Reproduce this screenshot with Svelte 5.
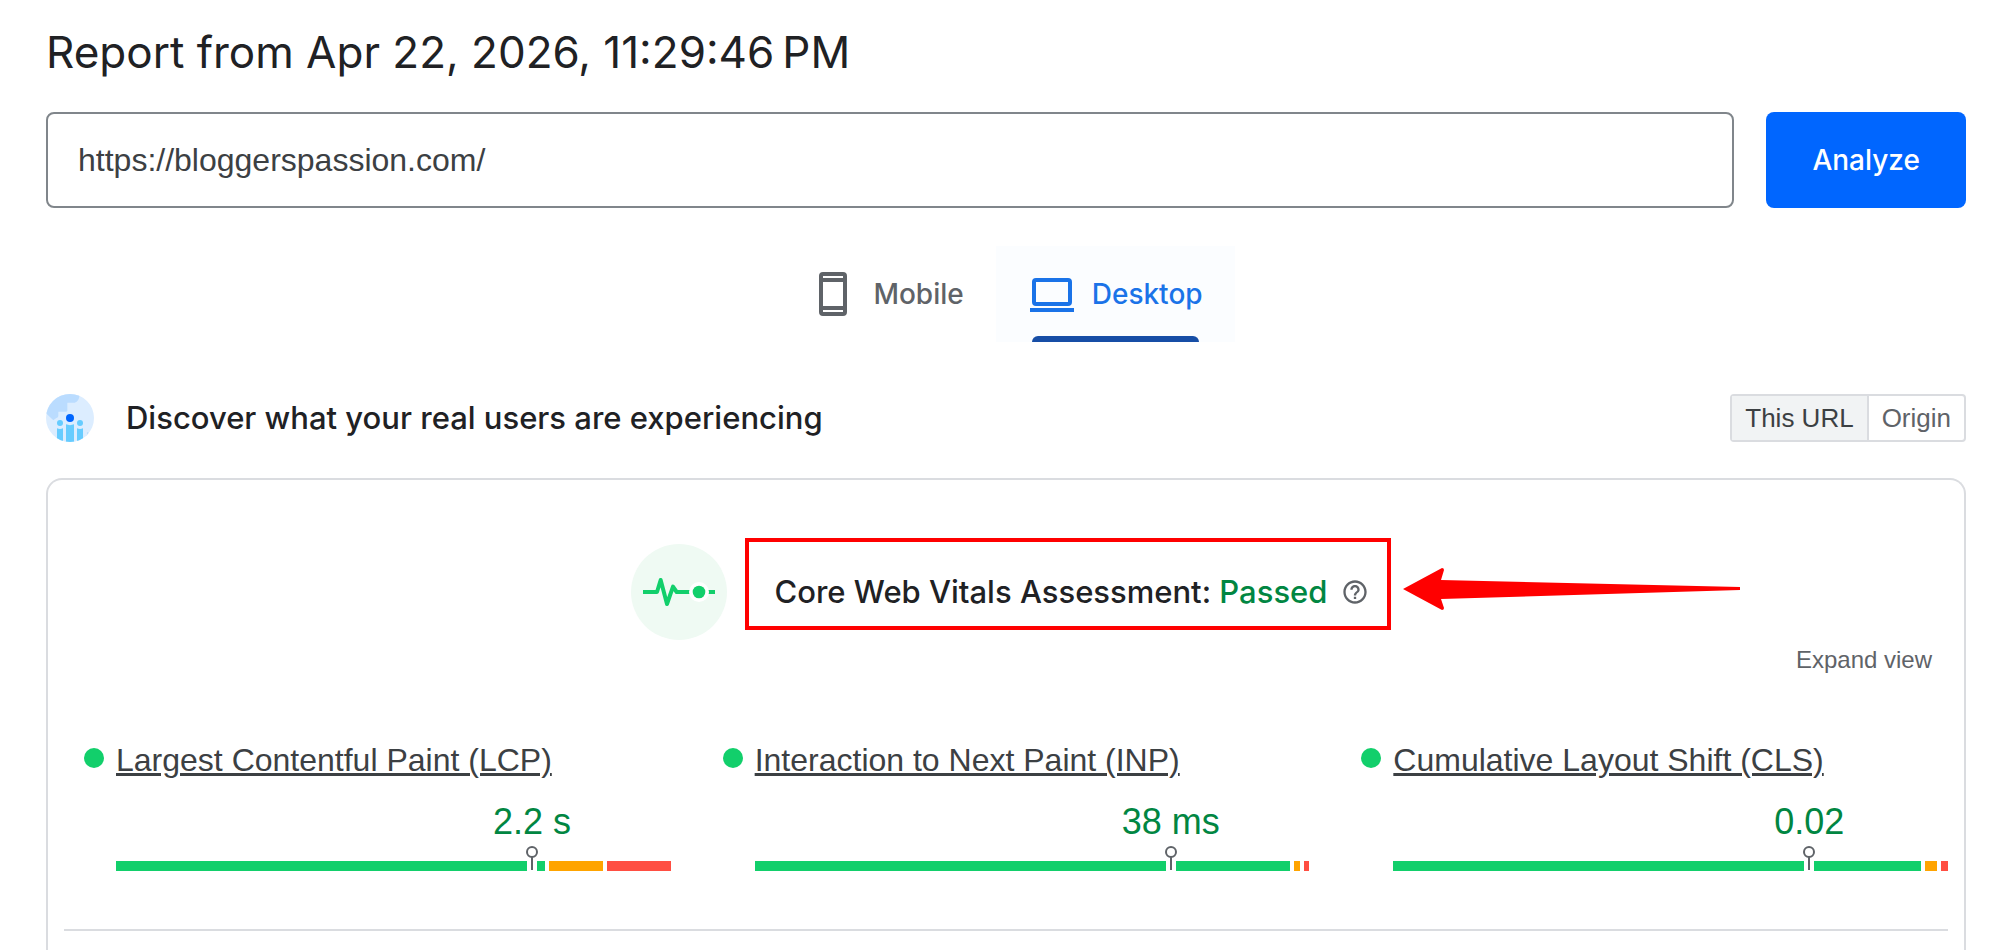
<script>
    const tabs = [
        { id: "mobile", label: "Mobile" },
        { id: "desktop", label: "Desktop" }
    ];

    const scopes = ["This URL", "Origin"];

    // good / average / poor are relative shares of the bar, pin is a percentage
    const metrics = [
        { name: "Largest Contentful Paint (LCP)", value: "2.2 s", pin: 75, good: 429, average: 54, poor: 64 },
        { name: "Interaction to Next Paint (INP)", value: "38 ms", pin: 75, good: 535, average: 6, poor: 5 },
        { name: "Cumulative Layout Shift (CLS)", value: "0.02", pin: 75, good: 528, average: 12, poor: 7 }
    ];

    let url = $state("https://bloggerspassion.com/");
    let activeTab = $state("desktop");
    let activeScope = $state("This URL");
</script>

<main class="report">
    <h1 class="report_title">Report from Apr 22, 2026, 11:29:46&#8239;PM</h1>

    <form class="search" onsubmit={(e) => e.preventDefault()}>
        <input class="search_input" type="text" aria-label="Enter a web page URL" bind:value={url}>
        <button class="search_button" type="submit">Analyze</button>
    </form>

    <div class="tabs" role="tablist">
        {#each tabs as tab}
            <button
                class="tab"
                class:active={activeTab === tab.id}
                role="tab"
                aria-selected={activeTab === tab.id}
                onclick={() => activeTab = tab.id}
            >
                <svg class="tab_icon" viewBox="0 0 24 24" aria-hidden="true">
                    {#if tab.id === "mobile"}
                        <path fill="currentColor" fill-rule="evenodd" d="M7 1h10a2 2 0 0 1 2 2v18a2 2 0 0 1-2 2H7a2 2 0 0 1-2-2V3a2 2 0 0 1 2-2zM7 3v1h10V3zM7 6v12h10V6zM7 20v1h10v-1z" />
                    {:else}
                        <path fill="currentColor" fill-rule="evenodd" d="M4 4h16a2 2 0 0 1 2 2v10a2 2 0 0 1-2 2H4a2 2 0 0 1-2-2V6a2 2 0 0 1 2-2zM4 6v10h16V6zM1 19h22v2H1z" />
                    {/if}
                </svg>
                <span>{tab.label}</span>
            </button>
        {/each}
    </div>

    <div class="section-header">
        <svg class="section-header_icon" viewBox="0 0 144 144" aria-hidden="true">
            <clipPath id="globe"><circle cx="72" cy="72" r="72" /></clipPath>
            <g clip-path="url(#globe)">
                <rect width="144" height="144" fill="#dcedff" />
                <path fill="#badcff" d="M0 0H101Q99 24 86 26H64V50Q63 53 60 53H37V66Q36 72 30 73L22 79L0 58Z" />
                <path fill="#badcff" d="M121 113L144 123V132H121Z" />
                <path fill="#dcedff" d="M28 102H118L123 110V144H28Z" />
                <circle cx="72" cy="72" r="12" fill="#0066ff" />
                <circle cx="42" cy="87" r="9" fill="#66ccff" />
                <circle cx="102" cy="87" r="9" fill="#66ccff" />
                <path fill="#66ccff" d="M60 91Q72 96 84 91V144H60ZM33 103Q42 107 51 103V144H33ZM93 103Q102 107 111 103V144H93Z" />
            </g>
        </svg>
        <h2 class="section-header_title">Discover what your real users are experiencing</h2>
        <div class="scope">
            {#each scopes as scope}
                <button
                    class="scope_button"
                    class:active={activeScope === scope}
                    aria-pressed={activeScope === scope}
                    onclick={() => activeScope = scope}
                >{scope}</button>
            {/each}
        </div>
    </div>

    <section class="card">
        <div class="assessment">
            <svg class="assessment_pulse" viewBox="0 0 288 288" aria-hidden="true">
                <circle cx="144" cy="144" r="144" fill="#effaf3" />
                <path d="M36 144H78L89 108L108 180L126 128L137 144H252" fill="none" stroke="#12cf6b" stroke-width="12" stroke-linejoin="round" />
                <circle cx="204" cy="144" r="30" fill="#fff" />
                <circle cx="204" cy="144" r="19" fill="#12cf6b" />
            </svg>
            <div class="assessment_box">
                <h3 class="assessment_title">Core Web Vitals Assessment: <span class="passed">Passed</span></h3>
                <button class="help" aria-label="About this assessment">
                    <svg viewBox="0 0 24 24" aria-hidden="true">
                        <path fill="currentColor" d="M11 18h2v-2h-2v2zm1-16C6.480 2 2 6.480 2 12s4.480 10 10 10 10-4.480 10-10S17.520 2 12 2zm0 18c-4.410 0-8-3.590-8-8s3.590-8 8-8 8 3.590 8 8-3.590 8-8 8zm0-14c-2.210 0-4 1.790-4 4h2c0-1.100.9-2 2-2s2 .9 2 2c0 2-3 1.750-3 5h2c0-2.250 3-2.500 3-5 0-2.210-1.790-4-4-4z" />
                    </svg>
                </button>
                <svg class="arrow" viewBox="0 0 340 44" aria-hidden="true">
                    <path fill="#f00" d="M0 22L39 1Q41 1 41 3L38 13L337 20V23L38 32L41 41Q41 43 39 43Z" />
                </svg>
            </div>
        </div>

        <div class="toolbar">
            <button class="expand">Expand view</button>
        </div>

        <div class="metrics">
            {#each metrics as metric}
                <div class="metric">
                    <span class="metric_dot"></span>
                    <div class="metric_body">
                        <a class="metric_name" href="#metric">{metric.name}</a>
                        <div class="metric_chart">
                            <div class="metric_value" style="left: {metric.pin}%">{metric.value}</div>
                            <div class="bar">
                                <span class="good" style="flex-grow: {metric.good}"></span>
                                <span class="average" style="flex-grow: {metric.average}"></span>
                                <span class="poor" style="flex-grow: {metric.poor}"></span>
                            </div>
                            <svg class="pin" style="left: {metric.pin}%" viewBox="0 0 14 28" aria-hidden="true">
                                <rect x="2" y="14" width="10" height="14" fill="#fff" />
                                <circle cx="7" cy="7" r="5" fill="#fff" stroke="#5f6368" stroke-width="2" />
                                <path d="M7 12V25" stroke="#5f6368" stroke-width="2" />
                            </svg>
                        </div>
                    </div>
                </div>
            {/each}
        </div>
    </section>
</main>

<style>
    :global(body) {
        background: #fff;
    }

    button {
        border: none;
        background: none;
        padding: 0;
        cursor: pointer;
    }

    h1, h2, h3 {
        margin: 0;
    }

    .report {
        display: flex;
        flex-direction: column;
        box-sizing: border-box;
        height: 100vh;
        padding: 20px 48px 0 46px;
        overflow: hidden;
        color: #202124;
        font-family: "Liberation Sans", Arial, sans-serif;
    }

    .report_title {
        margin-bottom: 28px;
        font: 400 44px/64px Inter, sans-serif;
    }

    .search {
        display: flex;
        gap: 32px;
    }

    .search_input {
        flex: 1;
        min-width: 0;
        box-sizing: border-box;
        height: 96px;
        padding: 0 30px;
        border: 2px solid #80868b;
        border-radius: 8px;
        color: #3c4043;
        font: 32px "Liberation Sans", Arial, sans-serif;
    }

    .search_button {
        padding: 0 46px;
        border-radius: 8px;
        background: #06f;
        color: #fff;
        font: 500 28px Inter, sans-serif;
    }

    .tabs {
        display: flex;
        justify-content: center;
        margin: 38px 0 52px;
    }

    .tab {
        position: relative;
        display: flex;
        align-items: center;
        gap: 16px;
        height: 96px;
        padding: 0 32px;
        color: #5f6368;
        font: 500 28px Inter, sans-serif;
    }

    .tab.active {
        background: #fbfdff;
        color: #1a73e8;
    }

    .tab.active::after {
        content: "";
        position: absolute;
        right: 36px;
        bottom: 0;
        left: 36px;
        height: 6px;
        border-radius: 6px 6px 0 0;
        background: #174ea6;
    }

    .tab_icon {
        width: 48px;
        height: 48px;
    }

    .section-header {
        display: flex;
        align-items: center;
        margin-bottom: 36px;
    }

    .section-header_icon {
        width: 48px;
        height: 48px;
        margin-right: 32px;
    }

    .section-header_title {
        flex: 1;
        font: 500 31px/48px Inter, sans-serif;
    }

    .scope {
        display: flex;
        border: 2px solid #dadce0;
        border-radius: 4px;
    }

    .scope_button {
        height: 44px;
        padding: 0 13px;
        color: #5f6368;
        font: 26px "Liberation Sans", Arial, sans-serif;
    }

    .scope_button + .scope_button {
        border-left: 2px solid #dadce0;
    }

    .scope_button.active {
        background: #f1f3f4;
        color: #3c4043;
    }

    .card {
        flex: 1;
        padding: 48px 16px 0;
        border: 2px solid #dadce0;
        border-bottom: none;
        border-radius: 16px 16px 0 0;
    }

    .assessment {
        display: flex;
        align-items: center;
        justify-content: center;
        gap: 18px;
        padding-left: 10px;
    }

    .assessment_pulse {
        width: 96px;
        height: 96px;
        margin-top: 16px;
    }

    .assessment_box {
        position: relative;
        display: flex;
        align-items: center;
        gap: 14px;
        padding: 26px 18px 10px 26px;
        border: 4px solid #f00;
    }

    .assessment_title {
        font: 500 31px/48px Inter, sans-serif;
    }

    .passed {
        color: #018642;
    }

    .help {
        width: 28px;
        height: 28px;
        color: #5f6368;
    }

    .help svg {
        display: block;
    }

    .arrow {
        position: absolute;
        top: 25px;
        left: calc(100% + 16px);
        width: 340px;
        height: 44px;
    }

    .toolbar {
        display: flex;
        justify-content: flex-end;
        padding: 4px 16px 0 0;
    }

    .expand {
        color: #5f6368;
        font: 24px/32px "Liberation Sans", Arial, sans-serif;
    }

    .metrics {
        display: grid;
        grid-template-columns: repeat(3, 1fr);
        gap: 52px;
        padding: 64px 0 58px 20px;
        border-bottom: 2px solid #dadce0;
    }

    .metric {
        display: flex;
        gap: 12px;
    }

    .metric_dot {
        width: 20px;
        height: 20px;
        margin-top: 8px;
        border-radius: 50%;
        background: #12cf6b;
    }

    .metric_body {
        flex: 1;
    }

    .metric_name {
        color: #3c4043;
        font-size: 32px;
        line-height: 40px;
        text-decoration-thickness: 3px;
    }

    .metric_chart {
        position: relative;
        padding-top: 81px;
    }

    .metric_value {
        position: absolute;
        top: 22px;
        transform: translateX(-50%);
        color: #018642;
        font-size: 36px;
        line-height: 40px;
        white-space: nowrap;
    }

    .bar {
        display: flex;
        gap: 4px;
        height: 10px;
    }

    .bar .good {
        background: #12cf6b;
    }

    .bar .average {
        background: #ffa400;
    }

    .bar .poor {
        background: #ff4e42;
    }

    .pin {
        position: absolute;
        bottom: -2px;
        width: 14px;
        height: 28px;
        margin-left: -7px;
    }
</style>
